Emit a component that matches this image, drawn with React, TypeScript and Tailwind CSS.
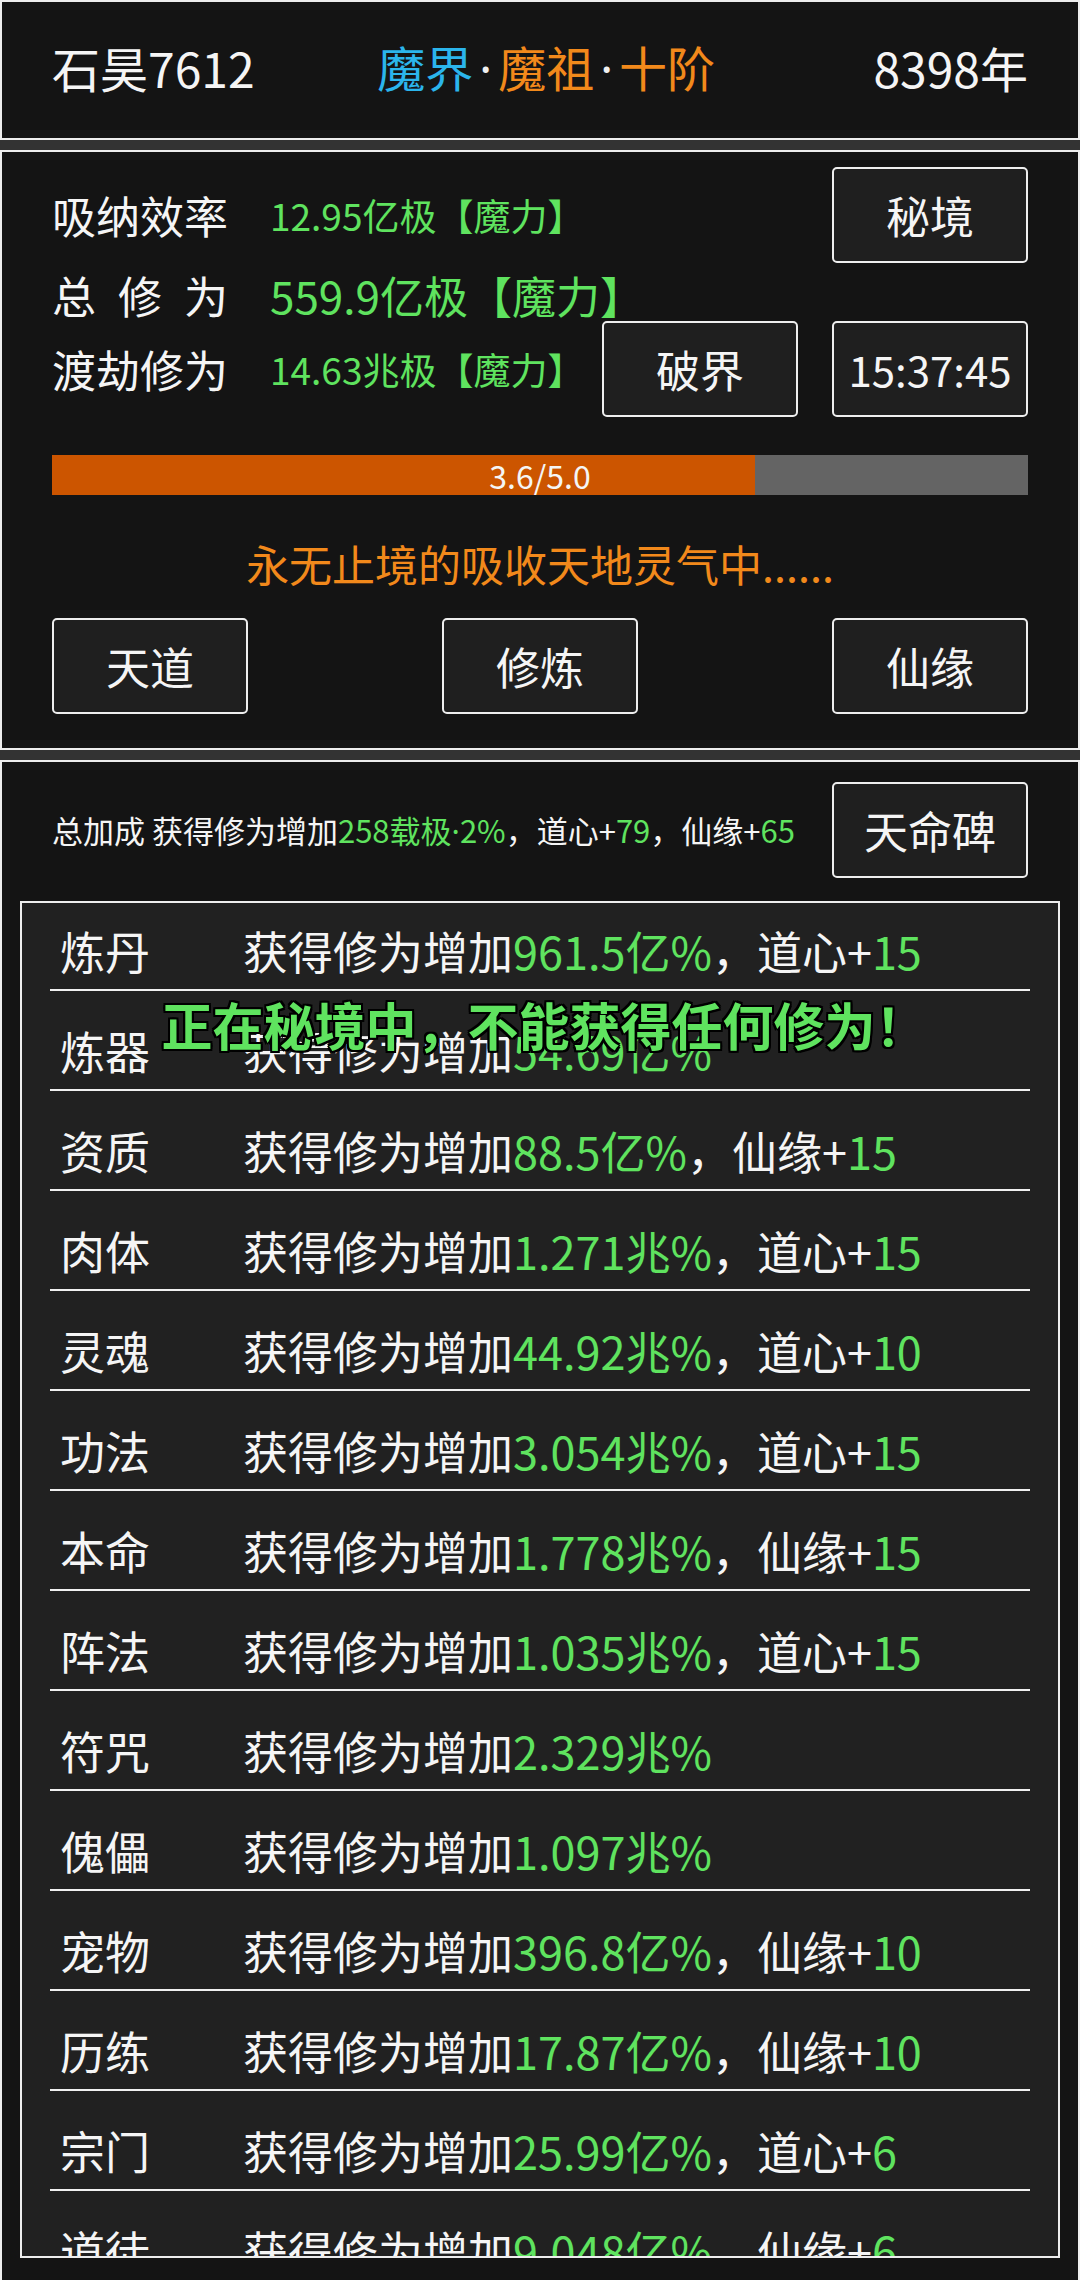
import React from 'react';

const GREEN = 'text-[#5fe35f]';
const DOT = "font-['Noto_Sans',sans-serif]";

type Row = { name: string; pct: string; extra?: [string, string] };

const rows: Row[] = [
  { name: '炼丹', pct: '961.5亿%', extra: ['道心', '15'] },
  { name: '炼器', pct: '54.69亿%' },
  { name: '资质', pct: '88.5亿%', extra: ['仙缘', '15'] },
  { name: '肉体', pct: '1.271兆%', extra: ['道心', '15'] },
  { name: '灵魂', pct: '44.92兆%', extra: ['道心', '10'] },
  { name: '功法', pct: '3.054兆%', extra: ['道心', '15'] },
  { name: '本命', pct: '1.778兆%', extra: ['仙缘', '15'] },
  { name: '阵法', pct: '1.035兆%', extra: ['道心', '15'] },
  { name: '符咒', pct: '2.329兆%' },
  { name: '傀儡', pct: '1.097兆%' },
  { name: '宠物', pct: '396.8亿%', extra: ['仙缘', '10'] },
  { name: '历练', pct: '17.87亿%', extra: ['仙缘', '10'] },
  { name: '宗门', pct: '25.99亿%', extra: ['道心', '6'] },
  { name: '道徒', pct: '9.048亿%', extra: ['仙缘', '6'] },
];

function Btn({ children, className = '' }: { children: React.ReactNode; className?: string }) {
  return (
    <div
      className={
        'w-[196px] h-[96px] shrink-0 flex items-center justify-center rounded-[5px] border-2 border-[#eeeeee] bg-[#1f1f1f] leading-none text-[#f5f5f5] ' +
        className
      }
    >
      {children}
    </div>
  );
}

function Label({ chars }: { chars: string[] }) {
  return (
    <div className="w-[176px] shrink-0 flex justify-between text-[44px] leading-none text-[#f5f5f5]">
      {chars.map((c, i) => (
        <span key={i}>{c}</span>
      ))}
    </div>
  );
}

export default function App() {
  return (
    <div className="w-[1080px] h-[2280px] overflow-hidden bg-[#333333] flex flex-col font-['Noto_Sans_CJK_SC','Noto_Sans',sans-serif]">
      {/* header */}
      <div className="h-[140px] shrink-0 border-2 border-[#eeeeee] bg-[#141414] grid grid-cols-3 items-center px-[50px] pb-[6px] text-[48px] leading-none">
        <div className="text-[#f5f5f5] whitespace-nowrap">石昊7612</div>
        <div className="text-center whitespace-nowrap">
          <span className="text-[#2bb5ec]">魔界</span>
          <span className={'px-[6px] text-[#f0f0f0] ' + DOT}>·</span>
          <span className="text-[#f2891b]">魔祖</span>
          <span className={'px-[6px] text-[#f0f0f0] ' + DOT}>·</span>
          <span className="text-[#f2891b]">十阶</span>
        </div>
        <div className="text-right text-[#f5f5f5] whitespace-nowrap">8398年</div>
      </div>

      {/* status panel */}
      <div className="mt-[10px] h-[600px] shrink-0 border-2 border-[#eeeeee] bg-[#141414] px-[50px] pt-[15px]">
        <div className="flex">
          <div className="flex-1 min-w-0 flex flex-col">
            <div className="mt-[18px] h-[60px] flex items-center whitespace-nowrap">
              <Label chars={['吸', '纳', '效', '率']} />
              <span className={'ml-[42px] text-[37px] leading-none ' + GREEN}>12.95亿极【魔力】</span>
            </div>
            <div className="mt-[20px] h-[60px] flex items-center whitespace-nowrap">
              <Label chars={['总', '修', '为']} />
              <span className={'ml-[42px] text-[44px] leading-none ' + GREEN}>559.9亿极【魔力】</span>
            </div>
            <div className="mt-[14px] h-[60px] flex items-center whitespace-nowrap">
              <Label chars={['渡', '劫', '修', '为']} />
              <span className={'ml-[42px] text-[37px] leading-none ' + GREEN}>14.63兆极【魔力】</span>
            </div>
          </div>
          <div className="w-[426px] shrink-0 flex flex-col items-end gap-[58px]">
            <Btn className="text-[44px]">秘境</Btn>
            <div className="flex gap-[34px]">
              <Btn className="text-[44px]">破界</Btn>
              <Btn className="text-[42px]">15:37:45</Btn>
            </div>
          </div>
        </div>

        <div className="mt-[38px] h-[40px] bg-[#646464] relative flex items-center justify-center">
          <div className="absolute left-0 top-0 bottom-0 w-[72%] bg-[#cc5500]" />
          <span className="relative text-[32px] leading-none text-[#f5f5f5]">3.6/5.0</span>
        </div>

        <div className="mt-[40px] h-[56px] flex items-center justify-center text-[43px] leading-none text-[#f2891b] whitespace-nowrap">
          永无止境的吸收天地灵气中......
        </div>

        <div className="mt-[27px] flex justify-between">
          <Btn className="text-[44px]">天道</Btn>
          <Btn className="text-[44px]">修炼</Btn>
          <Btn className="text-[44px]">仙缘</Btn>
        </div>
      </div>

      {/* bonus panel */}
      <div className="mt-[10px] h-[1600px] shrink-0 border-2 border-[#eeeeee] bg-[#141414]">
        <div className="px-[50px] pt-[20px] flex items-center justify-between">
          <div className="text-[31px] leading-none text-[#f5f5f5] whitespace-nowrap">
            总加成 获得修为增加<span className={GREEN}>258载极<span className={DOT}>·</span>2%</span>，道心+
            <span className={GREEN}>79</span>，仙缘+<span className={GREEN}>65</span>
          </div>
          <Btn className="text-[44px]">天命碑</Btn>
        </div>

        <div className="relative mt-[23px] ml-[18px] mr-[18px] h-[1357px] border-2 border-[#eeeeee] bg-[#212121] overflow-hidden">
          <div className="-mt-[12px] px-[28px]">
            {rows.map((r) => (
              <div
                key={r.name}
                className="h-[100px] border-b-2 border-[#f0f0f0] flex items-center pt-[20px] text-[45px] leading-none text-[#f5f5f5] whitespace-nowrap"
              >
                <div className="w-[193px] shrink-0 pl-[10px]">{r.name}</div>
                <div>
                  获得修为增加<span className={GREEN}>{r.pct}</span>
                  {r.extra && (
                    <>
                      ，{r.extra[0]}+<span className={GREEN}>{r.extra[1]}</span>
                    </>
                  )}
                </div>
              </div>
            ))}
          </div>
          <div className="absolute left-[8px] right-0 top-[96px] text-center text-[51px] leading-none font-bold text-[#5fe35f] whitespace-nowrap [text-shadow:2px_0_0_#000,-2px_0_0_#000,0_2px_0_#000,0_-2px_0_#000,2px_2px_0_#000,-2px_-2px_0_#000,2px_-2px_0_#000,-2px_2px_0_#000]">
            正在秘境中，不能获得任何修为！
          </div>
        </div>
      </div>
    </div>
  );
}
